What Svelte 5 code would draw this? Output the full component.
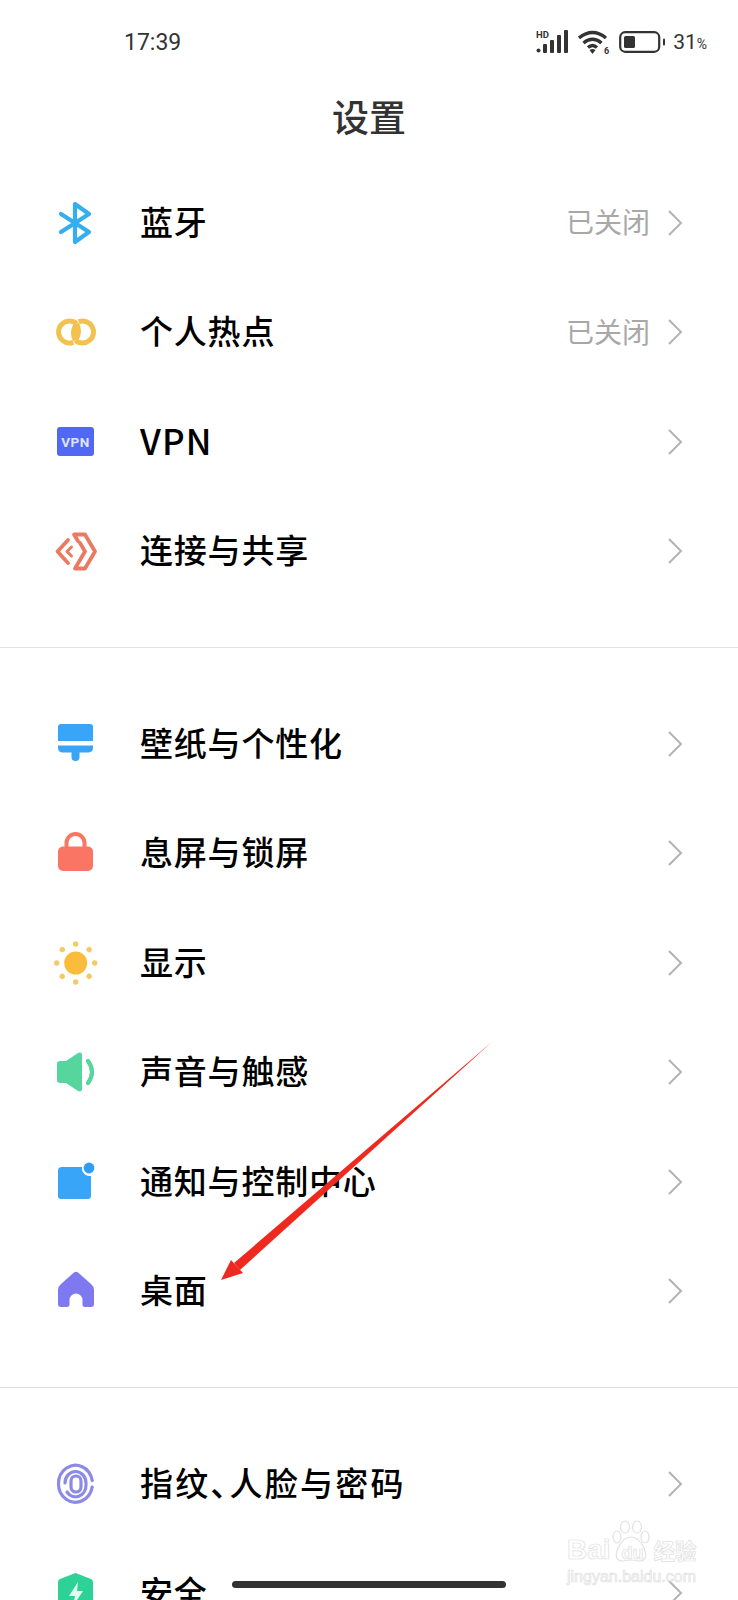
<script lang="ts">
    const firstGroup = [
        { icon: "bluetooth", label: "蓝牙", value: "已关闭" },
        { icon: "hotspot", label: "个人热点", value: "已关闭" },
        { icon: "vpn", label: "VPN", latin: true },
        { icon: "share", label: "连接与共享" }
    ];
    const secondGroup = [
        { icon: "wallpaper", label: "壁纸与个性化" },
        { icon: "lock", label: "息屏与锁屏" },
        { icon: "sun", label: "显示" },
        { icon: "sound", label: "声音与触感" },
        { icon: "notify", label: "通知与控制中心" },
        { icon: "home", label: "桌面" }
    ];
    const thirdGroup = [
        { icon: "finger", label: "指纹、人脸与密码", tight: true },
        { icon: "shield", label: "安全" }
    ];
    const groups = [firstGroup, secondGroup, thirdGroup];
    const sunDots = [0, 45, 90, 135, 180, 225, 270, 315];
</script>

{#snippet rowIcon(name: string)}
    <svg class="icon" viewBox="0 0 44 44" aria-hidden="true">
        {#if name === "bluetooth"}
            <path d="M7 13 L35 31 L21 41 V3 L35 13 L7 31" fill="none" stroke="#35aef0" stroke-width="4.200" stroke-linejoin="round" stroke-linecap="round" />
        {:else if name === "hotspot"}
            <g fill="none" stroke="#f2c14e" stroke-width="5">
                <path d="M22.600 13.600 A11 11 0 1 0 19.300 32.300" />
                <path d="M21.400 30.400 A11 11 0 1 0 24.700 11.700" />
                <path d="M22.600 13.600 Q17 22 21.400 30.400" />
                <path d="M21.400 30.400 Q27 22 22.600 13.600" />
            </g>
        {:else if name === "vpn"}
            <rect x="3" y="7" width="37" height="29" rx="3" fill="#5169f2" />
            <text x="21.500" y="26.500" class="vpn-text">VPN</text>
        {:else if name === "share"}
            <g fill="none" stroke="#ea7a62" stroke-width="3.800" stroke-linejoin="round" stroke-linecap="round">
                <path d="M24 12 L20 5.500 H31 L41 22.500 L31 39.500 H21 L31 22.500 L26 14" />
                <path d="M14 11 L3.500 22.500 L14 34" />
                <path d="M17.500 18 L13 22.500 L17.500 27" stroke-width="3" />
            </g>
        {:else if name === "wallpaper"}
            <path d="M7 2 H36 Q39 2 39 5 V19 H4 V5 Q4 2 7 2 Z" fill="#38a5f8" />
            <path d="M4 23.500 H39 V25.500 Q39 30.500 34 30.500 H25.500 V35 Q25.500 39 21.500 39 Q17.500 39 17.500 35 V30.500 H9 Q4 30.500 4 25.500 Z" fill="#38a5f8" />
        {:else if name === "lock"}
            <path d="M12.500 19 V12 A9 9 0 0 1 30.500 12 V19" fill="none" stroke="#fb7564" stroke-width="4" />
            <rect x="4" y="15.500" width="35" height="24.500" rx="5" fill="#fb7564" />
        {:else if name === "sun"}
            <circle cx="21.700" cy="22" r="11.500" fill="#fbbb3b" />
            {#each sunDots as angle}
                <circle cx="21.700" cy="3" r="2.700" fill="#f3cb65" transform="rotate({angle} 21.700 22)" />
            {/each}
        {:else if name === "sound"}
            <path d="M3 14 Q3 11 6 11 H12 L24 3 Q28 1.500 28 5 V39 Q28 42.500 24 41 L12 33 H6 Q3 33 3 30 Z" fill="#56d69d" />
            <path d="M34 11 Q42 22 34 33" fill="none" stroke="#56d69d" stroke-width="4.200" stroke-linecap="round" />
        {:else if name === "notify"}
            <path d="M8 7 H28 A8 8 0 0 0 37 16 V36 Q37 39 34 39 H7 Q4 39 4 36 V10.500 Q4 7 8 7 Z" fill="#38a5f8" />
            <circle cx="35" cy="8" r="5.400" fill="#2f9ef0" />
        {:else if name === "home"}
            <path d="M20 3.500 Q22 2 24 3.500 L37 15 Q40 17.500 40 21 V35 Q40 38 37 38 H31 Q28.500 38 28.500 36 V31 A6.500 6.500 0 0 0 15.500 31 V36 Q15.500 38 13 38 H7 Q4 38 4 35 V21 Q4 17.500 7 15 Z" fill="#7e79f1" />
        {:else if name === "finger"}
            <g fill="none" stroke="#8c8ae6" stroke-width="3.200" stroke-linecap="round">
                <path d="M38.200 18.500 A17 18.500 0 1 0 38.200 25" />
                <path d="M11 21 A10.500 11.500 0 0 1 32 21 V23 A10.500 11.500 0 0 1 13 30" />
                <rect x="17" y="14" width="10" height="16" rx="5" />
            </g>
        {:else if name === "shield"}
            <path d="M21.500 2 L37 8 Q39 9 39 11 V29 Q39 32 36 34 L21.500 43 L7 34 Q4 32 4 29 V11 Q4 9 6 8 Z" fill="#2fd296" />
            <path d="M24 11 L15 25 H21 L19 35 L29 20 H23 Z" fill="#e4fbf2" />
        {/if}
    </svg>
{/snippet}

<div class="screen">
    <div class="status">
        <span class="time">17:39</span>
        <div class="status-right">
            <svg class="signal" viewBox="0 0 33 26" aria-hidden="true">
                <text x="0" y="8.500" class="hd">HD</text>
                <g fill="#333">
                    <circle cx="2.500" cy="21.500" r="2" />
                    <rect x="7" y="15" width="4" height="9" rx="1" />
                    <rect x="14" y="11" width="4" height="13" rx="1" />
                    <rect x="21" y="6" width="4" height="18" rx="1" />
                    <rect x="28" y="1" width="4" height="23" rx="1" />
                </g>
            </svg>
            <svg class="wifi" viewBox="0 0 33 26" aria-hidden="true">
                <g fill="none" stroke="#333" stroke-width="3.400">
                    <path d="M1 9 Q14.500 -2 28 9" />
                    <path d="M5.500 14 Q14.500 6.500 23.500 14" />
                    <path d="M10 18.500 Q14.500 14.500 19 18.500" />
                </g>
                <path d="M14.500 25 L11.500 21 Q14.500 19 17.500 21 Z" fill="#333" />
                <text x="26" y="25" class="six">6</text>
            </svg>
            <svg class="battery" viewBox="0 0 47 22" aria-hidden="true">
                <rect x="1.200" y="1.200" width="39" height="19.600" rx="5" fill="none" stroke="#333" stroke-width="2.200" />
                <rect x="5" y="5" width="11" height="12" rx="1.500" fill="#333" />
                <rect x="44" y="7.500" width="2" height="7" rx="1" fill="#333" />
            </svg>
            <span class="percent">31<small>%</small></span>
        </div>
    </div>

    <h1 class="title">设置</h1>

    {#each groups as group, index}
        {#if index > 0}
            <div class="divider"></div>
        {/if}
        <ul class="group">
            {#each group as item}
                <li class="row">
                    <span class="icon-slot">{@render rowIcon(item.icon)}</span>
                    <span class="label" class:latin={item.latin} class:tight={item.tight}>{item.label}</span>
                    {#if item.value}
                        <span class="value">{item.value}</span>
                    {/if}
                    <svg class="chevron" viewBox="0 0 16 28" aria-hidden="true">
                        <path d="M2 2 L14 14 L2 26" fill="none" stroke="#b3b3b3" stroke-width="2" />
                    </svg>
                </li>
            {/each}
        </ul>
    {/each}

    <svg class="arrow" viewBox="0 0 738 1600" aria-hidden="true">
        <path d="M493 1041 L234 1263 L240 1270 Z" fill="#ee2a20" />
        <path d="M221 1280 L231 1260 L243 1273 Z" fill="#ee2a20" />
    </svg>

    <div class="home-bar"></div>

    <div class="watermark">
        <svg class="paw" viewBox="0 0 38 43" aria-hidden="true">
            <g fill="#fff" stroke="#e2e2e2" stroke-width="1.200">
                <ellipse cx="5" cy="17" rx="4" ry="6" />
                <ellipse cx="13" cy="7" rx="4.500" ry="6" />
                <ellipse cx="25" cy="7" rx="4.500" ry="6" />
                <ellipse cx="33" cy="17" rx="4" ry="6" />
                <path d="M19 17 Q27 17 32 28 Q37 41 27 41 Q19 39 11 41 Q1 41 6 28 Q11 17 19 17 Z" />
            </g>
        </svg>
        <div class="mark-main"><span class="bai">Bai</span><span class="du">du</span><span class="jy">经验</span></div>
        <div class="mark-sub">jingyan.baidu.com</div>
    </div>
</div>

<style>
    :global(body) {
        margin: 0;
        background: #fff;
    }

    .screen {
        position: relative;
        width: 738px;
        height: 1600px;
        overflow: hidden;
        background: #fff;
        color: #000;
        font-family: "Noto Sans CJK SC", "Noto Sans", sans-serif;
    }

    .status {
        display: flex;
        align-items: center;
        justify-content: space-between;
        height: 26px;
        padding: 29px 31px 0 124px;
        color: #333;
    }

    .time {
        font-family: Roboto, sans-serif;
        font-size: 23px;
    }

    .status-right {
        display: flex;
        align-items: center;
    }

    .signal {
        width: 33px;
        height: 26px;
        margin-right: 9px;
    }

    .hd {
        font: 700 9.500px Roboto, sans-serif;
        fill: #333;
    }

    .wifi {
        width: 33px;
        height: 26px;
        margin-right: 8px;
    }

    .six {
        font: 700 9px Roboto, sans-serif;
        fill: #333;
    }

    .battery {
        width: 47px;
        height: 22px;
        margin-right: 7px;
    }

    .percent {
        font-family: Roboto, sans-serif;
        font-size: 21px;
    }

    .percent small {
        font-size: 14px;
    }

    .title {
        margin: 0;
        padding-top: 34px;
        height: 54px;
        line-height: 54px;
        text-align: center;
        font-size: 37px;
        font-weight: 500;
        color: #333;
    }

    .group {
        list-style: none;
        margin: 0;
        padding: 0;
    }

    .group:first-of-type {
        padding-top: 25px;
    }

    .divider {
        height: 1px;
        margin: 41px 0 41px;
        background: #e2e2e2;
    }

    .row {
        display: flex;
        align-items: center;
        height: 109.500px;
        padding: 0 55px 0 54px;
    }

    .icon-slot {
        display: flex;
        width: 86px;
        flex: none;
    }

    .icon {
        width: 44px;
        height: 44px;
    }

    .vpn-text {
        font: 700 13.500px Roboto, sans-serif;
        fill: #dfe4ff;
        text-anchor: middle;
        letter-spacing: 0.5px;
    }

    .label {
        flex: 1;
        padding-bottom: 4px;
        font-size: 33px;
        font-weight: 500;
        letter-spacing: 0.8px;
    }

    .label.latin {
        font-size: 35px;
        letter-spacing: 1.200px;
    }

    /* the enumeration comma is narrower in the reference font */
    .label.tight {
        font-feature-settings: "palt";
        letter-spacing: 2.300px;
    }

    .value {
        margin-right: 17px;
        padding-bottom: 3px;
        font-size: 28px;
        color: #a8a8a8;
    }

    .chevron {
        width: 16px;
        height: 28px;
    }

    .arrow {
        position: absolute;
        inset: 0;
        width: 738px;
        height: 1600px;
        pointer-events: none;
    }

    .home-bar {
        position: absolute;
        left: 232px;
        top: 1581px;
        width: 274px;
        height: 7px;
        border-radius: 4px;
        background: #333;
    }

    .watermark {
        position: absolute;
        left: 567px;
        top: 1520px;
        width: 135px;
        color: transparent;
        -webkit-text-stroke: 0.7px #e0e0e0;
        font-family: "Liberation Sans", "Noto Sans CJK SC", sans-serif;
    }

    .paw {
        position: absolute;
        left: 45px;
        top: 0;
        width: 38px;
        height: 43px;
    }

    .mark-main {
        position: relative;
        display: flex;
        align-items: baseline;
        height: 32px;
        padding-top: 14px;
        font-size: 28px;
        font-weight: 700;
    }

    .du {
        font-size: 18px;
        margin: 0 10px 0 11px;
    }

    .jy {
        font-size: 21.500px;
    }

    .mark-sub {
        font-size: 16px;
        white-space: nowrap;
        margin-top: 2px;
    }
</style>
